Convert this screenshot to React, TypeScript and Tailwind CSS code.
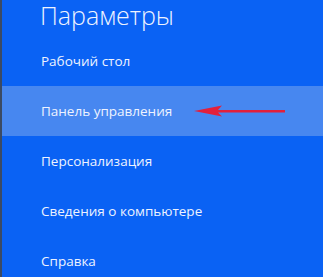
const items = ['Рабочий стол', 'Панель управления', 'Персонализация', 'Сведения о компьютере', 'Справка'];

const Arrow = () => (
  <svg width="92" height="12" viewBox="0 0 92 12" className="ml-[22px]">
    <path d="M0 6 L28 0.5 L24 5 L91 5 L91 7.5 L24 7.5 L28 11.5 Z" fill="#e3203c" />
  </svg>
);

export default function App() {
  return (
    <div className="flex h-[277px] w-[323px] overflow-hidden bg-[#0a62f4] font-['Open_Sans',sans-serif] text-[#eef3ff]">
      <div className="w-[2px] shrink-0 bg-[#3b4a63]" />
      <div className="flex flex-1 flex-col">
        <div className="h-[36px] shrink-0 pl-[38px] text-[25px] font-light leading-[30px]">Параметры</div>
        {items.map((t, i) => (
          <div
            key={t}
            className={`flex h-[50px] shrink-0 items-center pl-[39px] text-[13.5px] ${i === 1 ? 'bg-[#4787f0]' : ''}`}
          >
            <span>{t}</span>
            {i === 1 && <Arrow />}
          </div>
        ))}
      </div>
    </div>
  );
}
